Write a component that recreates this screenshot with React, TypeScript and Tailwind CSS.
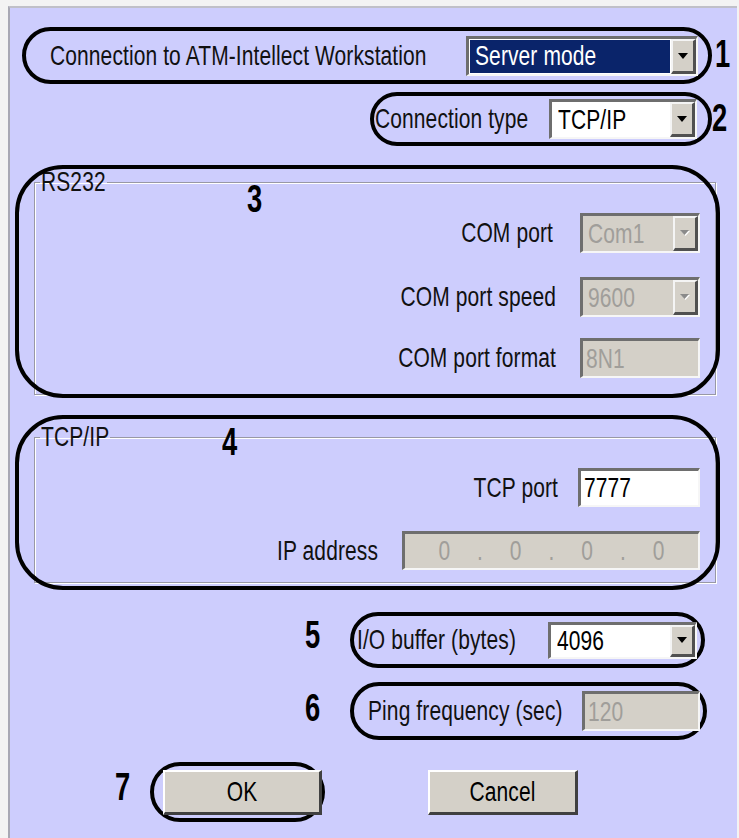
import React from "react";

const sunken =
  "border-t-[3px] border-l-[3px] border-t-[#6e6e6e] border-l-[#6e6e6e] border-b-2 border-r-2 border-b-[#f6f6f6] border-r-[#f6f6f6]";

function T({ children }: { children: React.ReactNode }) {
  return <span className="inline-block scale-y-[1.3] tracking-[0.1px]">{children}</span>;
}

function Arrow({ disabled }: { disabled?: boolean }) {
  return (
    <svg width="12" height="8" viewBox="0 0 12 8">
      {disabled ? (
        <>
          <polygon points="2,2 11,2 6.5,7" fill="#ffffff" />
          <polygon points="1,1 10,1 5.5,6" fill="#8a8a8a" />
        </>
      ) : (
        <polygon points="1,1 11,1 6,7" fill="#000000" />
      )}
    </svg>
  );
}

function DropBtn({ disabled }: { disabled?: boolean }) {
  return (
    <div className="w-[25px] shrink-0 bg-[#d4d0c8] border-t-2 border-l-2 border-t-[#f4f4f4] border-l-[#f4f4f4] border-b-[3px] border-r-[3px] border-b-[#505050] border-r-[#505050] flex items-center justify-center">
      <Arrow disabled={disabled} />
    </div>
  );
}

function Combo({
  value,
  w,
  h,
  variant,
}: {
  value: string;
  w: string;
  h: string;
  variant: "selected" | "white" | "disabled";
}) {
  const bg = variant === "disabled" ? "bg-[#d4d0c8]" : "bg-white";
  return (
    <div className={`flex ${w} ${h} ${sunken} ${bg}`}>
      <div className="flex-1 flex items-stretch p-[1px]">
        <div
          className={
            variant === "selected"
              ? "flex-1 flex items-center pl-[5px] bg-[#0a246a] text-white"
              : variant === "disabled"
              ? "flex-1 flex items-center pl-[4px] text-[#a09e9a]"
              : "flex-1 flex items-center pl-[5px] text-black"
          }
        >
          <T>{value}</T>
        </div>
      </div>
      <DropBtn disabled={variant === "disabled"} />
    </div>
  );
}

function Edit({
  value,
  w,
  h,
  disabled,
}: {
  value: string;
  w: string;
  h: string;
  disabled?: boolean;
}) {
  return (
    <div
      className={`flex items-center pl-[3px] ${w} ${h} ${sunken} ${
        disabled ? "bg-[#d4d0c8] text-[#a09e9a]" : "bg-white text-black"
      }`}
    >
      <T>{value}</T>
    </div>
  );
}

function Num({ n }: { n: string }) {
  return (
    <span className="inline-block origin-left scale-x-[0.72] text-[38px] font-bold leading-none text-black">
      {n}
    </span>
  );
}

function Oval({ className }: { className: string }) {
  return (
    <div
      className={`absolute border-[4px] border-black pointer-events-none ${className}`}
    />
  );
}

export default function App() {
  return (
    <div className="w-[739px] h-[838px] bg-[#f3f3f3] pl-[8px] pt-[6px] pr-[2px] overflow-hidden font-['Liberation_Sans',Arial,sans-serif] text-[21px] text-[#111]">
      <div className="h-full bg-[#cdcdfd] border-l-2 border-t-2 border-l-[#a8a8b4] border-t-[#c0c0c8] flex flex-col">
        {/* Row 1 */}
        <div className="flex items-center mt-[19px]">
          <div className="ml-[12px] w-[690px] h-[57px] rounded-full border-[4px] border-black flex items-center justify-between pl-[24px] pr-[10px]">
            <T>Connection to ATM-Intellect Workstation</T>
            <Combo value="Server mode" w="w-[232px]" h="h-[40px]" variant="selected" />
          </div>
          <div className="ml-[3px] w-[20px]">
            <Num n="1" />
          </div>
        </div>

        {/* Row 2 */}
        <div className="flex items-center mt-[8px]">
          <div className="ml-[360px] w-[342px] h-[54px] rounded-full border-[4px] border-black flex items-center justify-between pl-[1px] pr-[11px]">
            <T>Connection type</T>
            <Combo value="TCP/IP" w="w-[148px]" h="h-[40px]" variant="white" />
          </div>
          <div className="ml-[0px] w-[20px]">
            <Num n="2" />
          </div>
        </div>

        {/* RS232 group */}
        <div className="relative ml-[24px] mt-[25px] w-[682px]">
          <fieldset className="h-[224px] border border-[#9898a6] shadow-[inset_1px_1px_0_#ffffff,1px_1px_0_#ffffff] px-0 pb-0">
            <legend className="ml-[5px] px-[1px] leading-[22px]">
              <T>RS232</T>
            </legend>
            <div className="flex flex-col items-end pr-[15px] pt-[20px]">
              <div className="flex items-center gap-[27px]">
                <T>COM port</T>
                <Combo value="Com1" w="w-[120px]" h="h-[40px]" variant="disabled" />
              </div>
              <div className="flex items-center gap-[24px] mt-[24px]">
                <T>COM port speed</T>
                <Combo value="9600" w="w-[120px]" h="h-[40px]" variant="disabled" />
              </div>
              <div className="flex items-center gap-[24px] mt-[21px]">
                <T>COM port format</T>
                <Edit value="8N1" w="w-[120px]" h="h-[40px]" disabled />
              </div>
            </div>
          </fieldset>
          <div className="absolute left-[213px] top-[9px]">
            <Num n="3" />
          </div>
          <Oval className="-left-[19px] -top-[6px] -right-[4px] -bottom-[3px] rounded-[48px]" />
        </div>

        {/* TCP/IP group */}
        <div className="relative ml-[24px] mt-[31px] w-[682px]">
          <fieldset className="h-[157px] border border-[#9898a6] shadow-[inset_1px_1px_0_#ffffff,1px_1px_0_#ffffff] px-0 pb-0">
            <legend className="ml-[5px] px-[1px] leading-[22px]">
              <T>TCP/IP</T>
            </legend>
            <div className="flex flex-col items-end pr-[15px] pt-[20px]">
              <div className="flex items-center gap-[20px]">
                <T>TCP port</T>
                <Edit value="7777" w="w-[122px]" h="h-[39px]" />
              </div>
              <div className="flex items-center gap-[24px] mt-[24px]">
                <T>IP address</T>
                <div
                  className={`flex items-center justify-around w-[298px] h-[39px] ${sunken} bg-[#d4d0c8] text-[#a09e9a] px-[20px]`}
                >
                  <T>0</T>
                  <T>.</T>
                  <T>0</T>
                  <T>.</T>
                  <T>0</T>
                  <T>.</T>
                  <T>0</T>
                </div>
              </div>
            </div>
          </fieldset>
          <div className="absolute left-[188px] -top-[3px]">
            <Num n="4" />
          </div>
          <Oval className="-left-[19px] -top-[11px] -right-[4px] -bottom-[7px] rounded-[48px]" />
        </div>

        {/* Row 5 */}
        <div className="flex items-center mt-[29px]">
          <div className="ml-[295px] w-[21px] -mt-[8px]">
            <Num n="5" />
          </div>
          <div className="ml-[24px] w-[355px] h-[56px] rounded-full border-[4px] border-black flex items-center justify-between pl-[3px] pr-[4px]">
            <T>I/O buffer (bytes)</T>
            <Combo value="4096" w="w-[149px]" h="h-[37px]" variant="white" />
          </div>
        </div>

        {/* Row 6 */}
        <div className="flex items-center mt-[14px]">
          <div className="ml-[295px] w-[21px] -mt-[4px]">
            <Num n="6" />
          </div>
          <div className="ml-[24px] w-[357px] h-[58px] rounded-full border-[4px] border-black flex items-center justify-between pl-[14px] pr-[3px]">
            <T>Ping frequency (sec)</T>
            <Edit value="120" w="w-[118px]" h="h-[40px]" disabled />
          </div>
        </div>

        {/* Row 7 */}
        <div className="flex items-center mt-[22px]">
          <div className="ml-[105px] w-[21px] -mt-[8px]">
            <Num n="7" />
          </div>
          <div className="ml-[14px] w-[175px] h-[60px] rounded-full border-[4px] border-black flex items-center pl-[9px]">
            <button className="w-[159px] h-[45px] shrink-0 bg-[#d4d0c8] border-t-2 border-l-2 border-t-white border-l-white border-b-[3px] border-r-[3px] border-b-[#404040] border-r-[#404040] text-[21px] text-black">
              <T>OK</T>
            </button>
          </div>
          <button className="ml-[103px] w-[150px] h-[45px] bg-[#d4d0c8] border-t-2 border-l-2 border-t-white border-l-white border-b-[3px] border-r-[3px] border-b-[#404040] border-r-[#404040] text-[21px] text-black">
            <T>Cancel</T>
          </button>
        </div>
      </div>
    </div>
  );
}
